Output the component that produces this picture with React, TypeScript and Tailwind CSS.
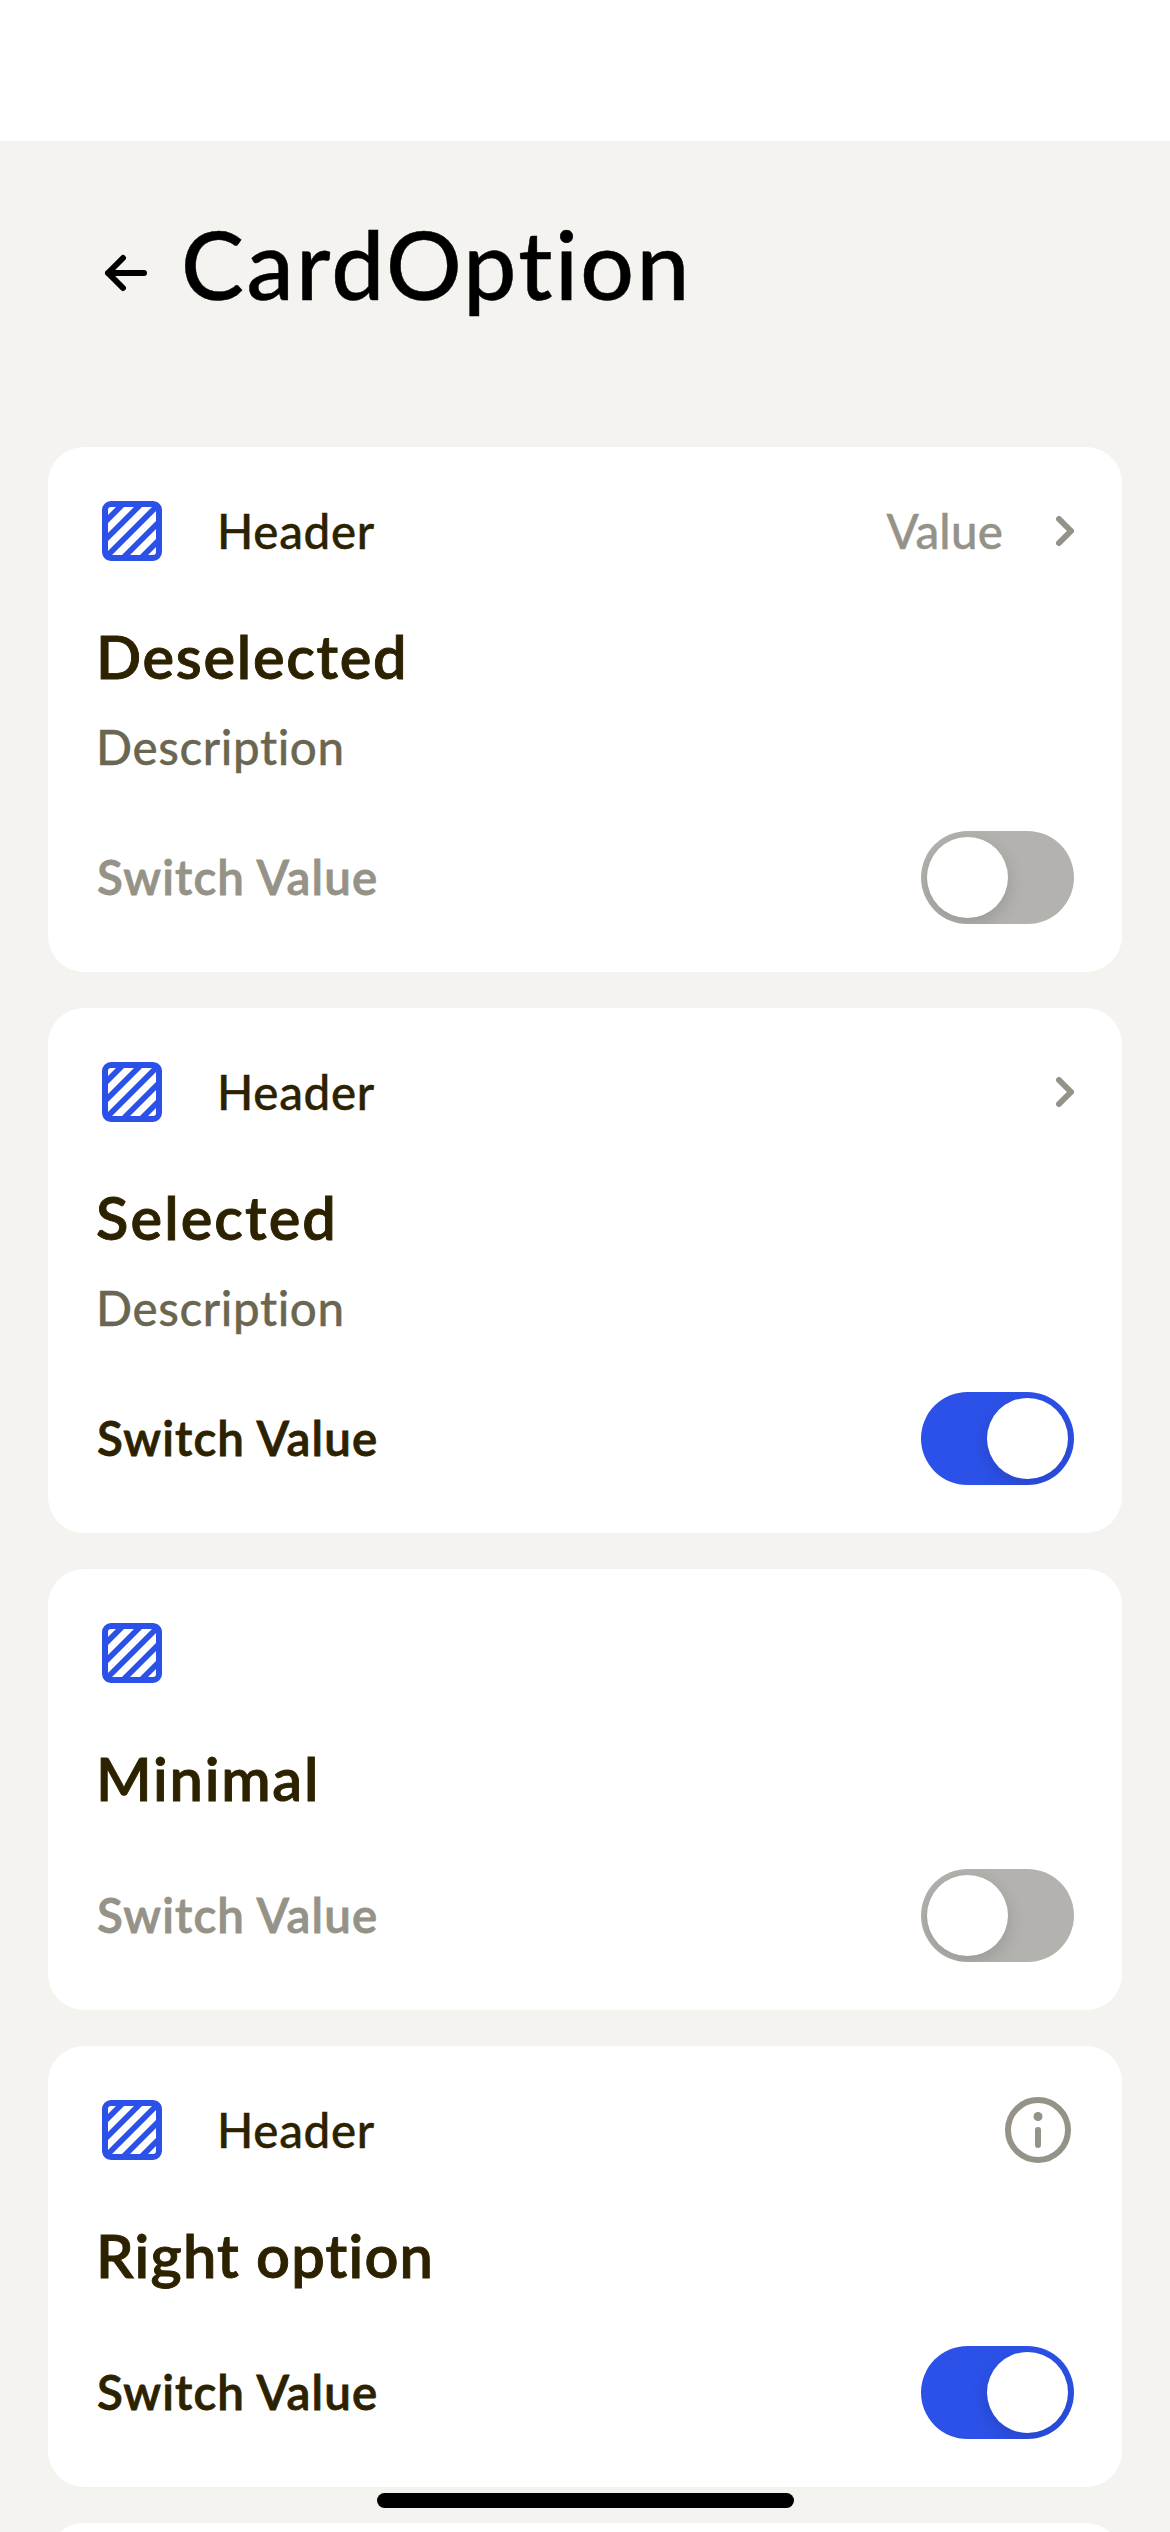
function BackArrow() {
  return (
    <svg className="mt-[4px] h-[72px] w-[72px] shrink-0" viewBox="0 0 72 72" fill="none" stroke="#000" strokeWidth="6" strokeLinecap="round" strokeLinejoin="round">
      <path d="M54 36H18M33 21 18 36l15 15" />
    </svg>
  );
}

function PatternIcon() {
  return (
    <svg className="h-[72px] w-[72px] shrink-0" viewBox="0 0 24 24" fill="none" stroke="#2c51e8">
      <rect x="3" y="3" width="18" height="18" rx="2" strokeWidth="2" />
      <path strokeWidth="1.9" d="M9 3 3 9M15 3 3 15M21 3 3 21M21 9 9 21M21 15l-6 6" />
    </svg>
  );
}

function Chevron() {
  return (
    <svg className="h-[30px] w-[18px] shrink-0" viewBox="0 0 18 30" fill="none" stroke="#959288" strokeWidth="6" strokeLinecap="round" strokeLinejoin="round">
      <path d="M3 3l12 12L3 27" />
    </svg>
  );
}

function InfoIcon() {
  return (
    <svg className="h-[72px] w-[72px] shrink-0" viewBox="0 0 24 24" fill="none">
      <circle cx="12" cy="12" r="10" stroke="#959288" strokeWidth="2" />
      <circle cx="12" cy="7.5" r="1.5" fill="#959288" />
      <rect x="11" y="11" width="2" height="7" rx="1" fill="#959288" />
    </svg>
  );
}

function Switch({ on }: { on: boolean }) {
  return (
    <div
      role="switch"
      aria-checked={on}
      className={`flex h-[93px] w-[153px] shrink-0 overflow-hidden rounded-full p-[6px] ${on ? "justify-end bg-[#2c51e8]" : "justify-start bg-[#b3b2ae]"}`}
    >
      <div className="h-[81px] w-[81px] rounded-full bg-white shadow-[0_6px_18px_rgba(0,0,0,0.15)]" />
    </div>
  );
}

type CardProps = {
  header?: string;
  value?: string;
  right?: "chevron" | "info";
  title: string;
  titleTracking: string;
  description?: string;
  on: boolean;
};

function CardOption({ header, value, right, title, titleTracking, description, on }: CardProps) {
  return (
    <section className="flex flex-col rounded-[36px] bg-white p-12">
      <div className="flex h-[72px] items-center">
        <PatternIcon />
        {header && <span className="ml-[49px] pb-px text-[47.5px] leading-[60px] font-medium tracking-[0.7px] text-[#2c2200] [-webkit-text-stroke:0.4px]">{header}</span>}
        <div className="ml-auto flex items-center">
          {value && <span className="mr-[53px] pb-px text-[47.5px] leading-[60px] font-medium tracking-[0.2px] text-[#959288] [-webkit-text-stroke:0.4px]">{value}</span>}
          {right === "chevron" && <Chevron />}
          {right === "info" && <InfoIcon />}
        </div>
      </div>
      <h2 className={`mt-[53px] text-[59.5px] leading-[72px] font-semibold text-[#2c2200] [-webkit-text-stroke:0.9px] ${titleTracking}`}>{title}</h2>
      {description && <p className="mt-[25px] -mb-px text-[47.5px] leading-[60px] font-medium tracking-[0.6px] text-[#6b6651] [-webkit-text-stroke:0.3px]">{description}</p>}
      <div className="mt-[55px] flex h-[93px] items-center justify-between">
        <span className={`ml-px pb-px text-[47.5px] leading-[60px] font-semibold tracking-[1.15px] [-webkit-text-stroke:0.8px] ${on ? "text-[#2c2200]" : "text-[#959288]"}`}>Switch Value</span>
        <Switch on={on} />
      </div>
    </section>
  );
}

export default function App() {
  return (
    <main className="relative flex h-[2532px] w-[1170px] flex-col overflow-hidden bg-[#f4f3ef] font-['Lato',sans-serif]">
      <div className="h-[141px] shrink-0 bg-white" />
      <header className="flex h-[306px] shrink-0 items-start pt-[92px] pl-[90px]">
        <BackArrow />
        <h1 className="-mt-[29px] ml-[19px] text-[94.5px] leading-[120px] font-medium tracking-[2.4px] text-black [-webkit-text-stroke:0.5px]">CardOption</h1>
      </header>
      <div className="flex flex-col gap-9 px-12">
        <CardOption header="Header" value="Value" right="chevron" title="Deselected" titleTracking="tracking-[1.7px]" description="Description" on={false} />
        <CardOption header="Header" right="chevron" title="Selected" titleTracking="tracking-[2.1px]" description="Description" on />
        <CardOption title="Minimal" titleTracking="tracking-[1.75px]" on={false} />
        <CardOption header="Header" right="info" title="Right option" titleTracking="tracking-[1.2px]" on />
        <section className="h-[441px] rounded-[36px] bg-white" />
      </div>
      <div className="absolute bottom-6 left-[377px] h-[15px] w-[417px] rounded-full bg-black" />
    </main>
  );
}
